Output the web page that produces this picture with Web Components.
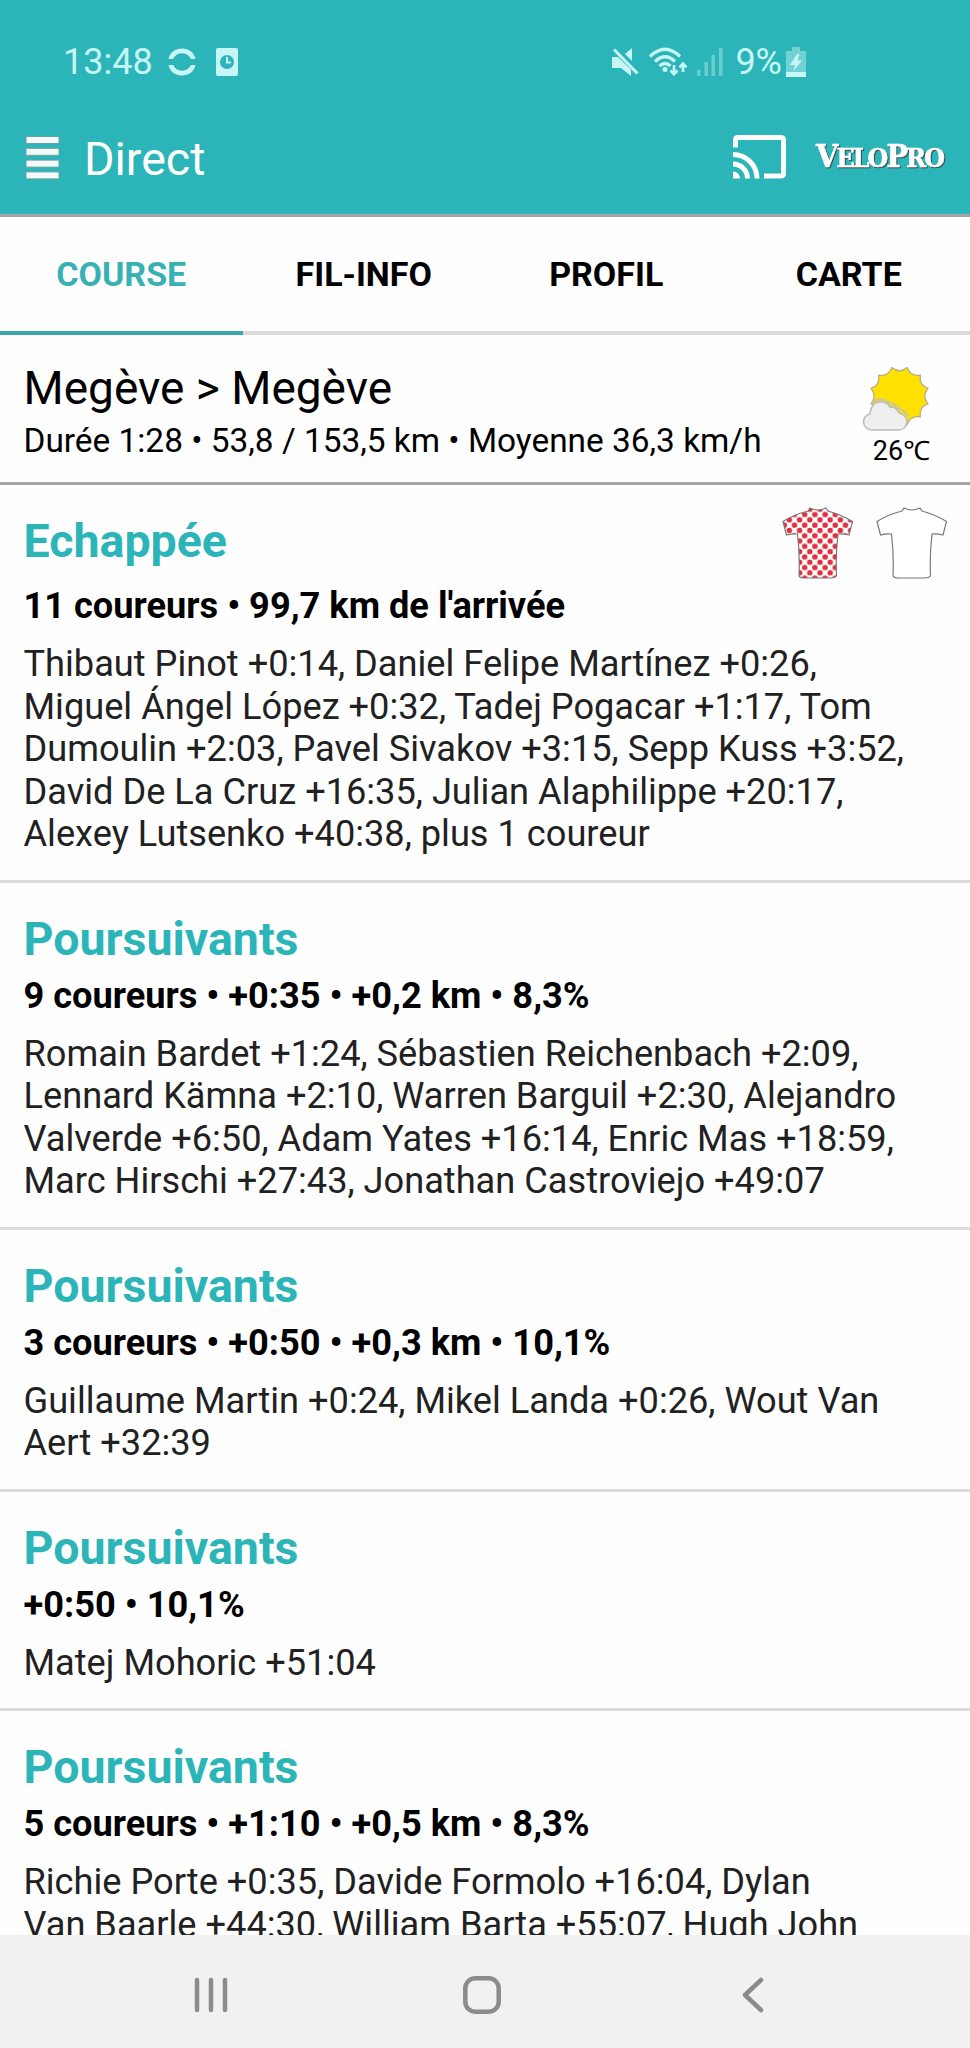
<!DOCTYPE html>
<html lang="fr">
<head>
<meta charset="utf-8">
<title>VeloPro - Direct</title>
<style>
  :root {
    --color-accent: #2cb5b8;
    --color-text: #000;
    --color-body: #212121;
    --color-divider: #dcdcdc;
    --color-border: #a3a5a5;
    --gutter: 23.5px;
  }
  body {
    margin: 0;
    height: 2048px;
    overflow: hidden;
    background: #fefefe;
    color: var(--color-text);
    font-family: Roboto, "Noto Sans", sans-serif;
  }
</style>
</head>
<body>
<velo-app>
  <status-bar slot="top" time="13:48" battery="9%"></status-bar>
  <app-header slot="top">Direct</app-header>
  <tab-bar slot="top">
    <tab-item active>COURSE</tab-item>
    <tab-item>FIL-INFO</tab-item>
    <tab-item>PROFIL</tab-item>
    <tab-item>CARTE</tab-item>
  </tab-bar>
  <stage-summary slot="top" route="Megève &gt; Megève" temperature="26℃">Durée 1:28 • 53,8 / 153,5 km • Moyenne 36,3 km/h</stage-summary>

  <rider-group heading="Echappée" info="11 coureurs • 99,7 km de l'arrivée" jerseys>
    <team-jersey slot="jerseys" dotted></team-jersey>
    <team-jersey slot="jerseys"></team-jersey>
    Thibaut Pinot +0:14, Daniel Felipe Martínez +0:26,<br>
    Miguel Ángel López +0:32, Tadej Pogacar +1:17, Tom<br>
    Dumoulin +2:03, Pavel Sivakov +3:15, Sepp Kuss +3:52,<br>
    David De La Cruz +16:35, Julian Alaphilippe +20:17,<br>
    Alexey Lutsenko +40:38, plus 1 coureur
  </rider-group>
  <rider-group heading="Poursuivants" info="9 coureurs • +0:35 • +0,2 km • 8,3%">
    Romain Bardet +1:24, Sébastien Reichenbach +2:09,<br>
    Lennard Kämna +2:10, Warren Barguil +2:30, Alejandro<br>
    Valverde +6:50, Adam Yates +16:14, Enric Mas +18:59,<br>
    Marc Hirschi +27:43, Jonathan Castroviejo +49:07
  </rider-group>
  <rider-group heading="Poursuivants" info="3 coureurs • +0:50 • +0,3 km • 10,1%">
    Guillaume Martin +0:24, Mikel Landa +0:26, Wout Van<br>
    Aert +32:39
  </rider-group>
  <rider-group heading="Poursuivants" info="+0:50 • 10,1%">
    Matej Mohoric +51:04
  </rider-group>
  <rider-group heading="Poursuivants" info="5 coureurs • +1:10 • +0,5 km • 8,3%">
    Richie Porte +0:35, Davide Formolo +16:04, Dylan<br>
    Van Baarle +44:30, William Barta +55:07, Hugh John
  </rider-group>

  <nav-buttons slot="bottom"></nav-buttons>
</velo-app>

<script>
class VeloApp extends HTMLElement {
  constructor() {
    super();
    this.attachShadow({ mode: "open" });
    this.shadowRoot.innerHTML = `
      <style>
        :host {
          display: flex;
          flex-direction: column;
          height: 100%;
        }
        main {
          flex: 1;
          min-height: 0;
          overflow: hidden;
        }
      </style>
      <slot name="top"></slot>
      <main><slot></slot></main>
      <slot name="bottom"></slot>
    `;
  }
}

class StatusBar extends HTMLElement {
  constructor() {
    super();
    this.attachShadow({ mode: "open" });
    this.shadowRoot.innerHTML = `
      <style>
        :host {
          display: flex;
          flex: none;
          justify-content: space-between;
          height: 110px;
          padding: 13px 164px 0 63px;
          box-sizing: border-box;
          background: var(--color-accent);
          color: #c8f5f5;
          font-size: 36px;
        }
        div {
          display: flex;
          align-items: center;
        }
        svg {
          display: block;
          fill: currentColor;
        }
        #sync { margin-left: 15px; }
        #clock { margin-left: 20px; }
        #wifi { margin-left: 10px; }
        #signal { margin-left: 9px; }
        #battery { margin-left: 12px; }
        #charge { margin-left: 4px; }
      </style>
      <div>
        <span id="time"></span>
        <svg id="sync" width="28" height="28" viewBox="0 0 28 28">
          <path d="M.500 11C2 4 7.500 .500 14 .500S26 4 27.500 11H23C21 7.300 18 5.300 14 5.300S7 7.300 5 11Z"/>
          <path d="M.500 17C2 24 7.500 27.500 14 27.500S26 24 27.500 17H23C21 20.700 18 22.700 14 22.700S7 20.700 5 17Z"/>
        </svg>
        <svg id="clock" width="22" height="28" viewBox="0 0 22 28">
          <path fill-rule="evenodd" d="M2 0H20Q22 0 22 2V26Q22 28 20 28H2Q0 28 0 26V2Q0 0 2 0ZM11 7A7 7 0 1 0 11 21A7 7 0 1 0 11 7Z"/>
          <path d="M11 9V14.500H15" fill="none" stroke="currentColor" stroke-width="2"/>
        </svg>
      </div>
      <div>
        <svg id="mute" width="27" height="28" viewBox="0 0 27 28">
          <path d="M0 9H6L19 21.500V28L9 20H0Z"/>
          <path d="M13 6L20 0V13Z"/>
          <path d="M2 1.500L25.500 25.500" fill="none" stroke="currentColor" stroke-width="3"/>
        </svg>
        <svg id="wifi" width="39" height="30" viewBox="0 0 39 30">
          <g fill="none" stroke="currentColor" stroke-width="3.200">
            <path d="M1 9.500Q16-5 31 9.500"/>
            <path d="M6 14.500Q16 5 26 14.500"/>
            <path d="M10.500 19Q16 14 21.500 19"/>
            <path d="M25 18V27M21.500 23.500L25 27.300L28.500 23.500M34 25V17M30.500 20.300L34 16.500L37.500 20.300" stroke-width="2.600"/>
          </g>
          <circle cx="16" cy="22.500" r="2.500"/>
        </svg>
        <svg id="signal" width="26" height="28" viewBox="0 0 26 28" opacity=".4">
          <path d="M0 22H3.500V28H0ZM7.500 14H11V28H7.500ZM14.500 7H18V28H14.500ZM22 0H25.500V28H22Z"/>
        </svg>
        <span id="battery"></span>
        <svg id="charge" width="20" height="30" viewBox="0 0 20 30">
          <path d="M6 0H14V4H20V30H0V4H6Z" opacity=".45"/>
          <path d="M0 25H20V30H0ZM11 7L4 18H9L7.500 24L16 13.500H11.500L13.500 7Z"/>
        </svg>
      </div>
    `;
  }

  connectedCallback() {
    this.shadowRoot.querySelector("#time").textContent = this.getAttribute("time");
    this.shadowRoot.querySelector("#battery").textContent = this.getAttribute("battery");
  }
}

class AppHeader extends HTMLElement {
  constructor() {
    super();
    this.attachShadow({ mode: "open" });
    this.shadowRoot.innerHTML = `
      <style>
        :host {
          display: flex;
          flex: none;
          align-items: center;
          height: 107px;
          padding: 0 24px 10px 25px;
          box-sizing: border-box;
          border-bottom: 3px solid var(--color-border);
          background: var(--color-accent);
          color: #fff;
        }
        h1 {
          flex: 1;
          margin: 4px 0 0 24px;
          font-size: 46.500px;
          font-weight: 400;
        }
        svg {
          display: block;
        }
        #brand {
          width: 130px;
          margin-left: 30px;
          font: 700 26.500px/40px "DejaVu Serif Condensed", "DejaVu Serif", serif;
          font-stretch: condensed;
          letter-spacing: -1.900px;
          white-space: nowrap;
          -webkit-text-stroke: .6px #fff;
          filter: drop-shadow(1.500px 1.500px .600px #3c4a4a);
        }
        #brand b {
          font-size: 32px;
        }
      </style>
      <svg width="35" height="45" viewBox="0 0 35 45" fill="#f4f8f8" stroke="#68a3a4" stroke-width="1">
        <rect x="1" y="1.500" width="33" height="7"/>
        <rect x="1" y="13.300" width="33" height="7"/>
        <rect x="1" y="25.100" width="33" height="7"/>
        <rect x="1" y="36.900" width="33" height="7"/>
      </svg>
      <h1><slot></slot></h1>
      <svg width="53" height="44" viewBox="0 0 53 44" fill="none" stroke="#fff" stroke-width="5">
        <path d="M2.500 12.500V5Q2.500 2.500 5 2.500H47.500Q50.500 2.500 50.500 5V38.500Q50.500 41 47.500 41H31"/>
        <path d="M0 19.500A24 24 0 0 1 24 43.500M0 29A14.500 14.500 0 0 1 14.500 43.500"/>
        <path d="M0 36.500A7 7 0 0 1 7 43.500H0Z" fill="#fff" stroke="none"/>
      </svg>
      <span id="brand"><b>V</b>ELO<b>P</b>RO</span>
    `;
  }
}

class TabBar extends HTMLElement {
  constructor() {
    super();
    this.attachShadow({ mode: "open" });
    this.shadowRoot.innerHTML = `
      <style>
        :host {
          display: grid;
          flex: none;
          grid-template-columns: repeat(4, 1fr);
          height: 118px;
        }
      </style>
      <slot></slot>
    `;
  }
}

class TabItem extends HTMLElement {
  constructor() {
    super();
    this.attachShadow({ mode: "open" });
    this.shadowRoot.innerHTML = `
      <style>
        :host {
          display: flex;
          align-items: center;
          justify-content: center;
          box-sizing: border-box;
          border-bottom: 4px solid var(--color-divider);
          font-size: 34px;
          font-weight: 700;
        }
        :host([active]) {
          color: #38b1b3;
          border-color: #3aa9ac;
        }
      </style>
      <slot></slot>
    `;
  }
}

class StageSummary extends HTMLElement {
  constructor() {
    super();
    this.attachShadow({ mode: "open" });
    this.shadowRoot.innerHTML = `
      <style>
        :host {
          display: flex;
          flex: none;
          justify-content: space-between;
          height: 150px;
          padding: 0 40px 0 var(--gutter);
          box-sizing: border-box;
          border-bottom: 3px solid var(--color-border);
        }
        h2 {
          margin: 26px 0 0;
          font-size: 46px;
          line-height: 54px;
          font-weight: 400;
        }
        p {
          margin: 4px 0 0;
          font-size: 33.400px;
          line-height: 43px;
        }
        #weather {
          display: flex;
          flex-direction: column;
          align-items: flex-end;
          padding-top: 31px;
          font-size: 27px;
          line-height: 38px;
        }
        svg {
          display: block;
          margin-right: 1px;
        }
      </style>
      <div>
        <h2></h2>
        <p><slot></slot></p>
      </div>
      <div id="weather">
        <svg width="67" height="66" viewBox="0 0 67 66" stroke-linejoin="round">
          <path id="sun" fill="#ffe100" stroke="#b9ad86" stroke-width="1.300"/>
          <path d="M10 64Q2 63 1.500 56Q2 49 8 48Q9 37 17 36Q24 35 28 41Q34 40 37 47Q45 49 45 56Q44 64 36 64Z" fill="#efefef" stroke="#bbb" stroke-width="1.500"/>
          <path d="M10 38Q13 33 17 34Q23 32 27 37Q33 37 37 43Q43 44 46 50" fill="none" stroke="#c9c4b2" stroke-width="2"/>
        </svg>
        <span id="temperature"></span>
      </div>
    `;
  }

  connectedCallback() {
    this.shadowRoot.querySelector("h2").textContent = this.getAttribute("route");
    this.shadowRoot.querySelector("#temperature").textContent = this.getAttribute("temperature");
    this.shadowRoot.querySelector("#sun").setAttribute("d", this.sunPath(37.5, 30, 29.5, 26));
  }

  // Twelve points joined by arcs that bow inwards
  sunPath(cx, cy, tip, inner) {
    const at = (deg, r) => {
      const a = deg * Math.PI / 180;
      return (cx + Math.cos(a) * r).toFixed(1) + " " + (cy + Math.sin(a) * r).toFixed(1);
    };
    let d = "M" + at(15, tip);
    for (let i = 1; i <= 12; i++) {
      d += "Q" + at(i * 30, inner - 4) + " " + at(i * 30 + 15, tip);
    }
    return d + "Z";
  }
}

class TeamJersey extends HTMLElement {
  constructor() {
    super();
    this.attachShadow({ mode: "open" });
    this.shadowRoot.innerHTML = `
      <style>
        :host {
          display: block;
        }
        svg {
          display: block;
        }
        #dots {
          display: none;
        }
        :host([dotted]) #dots {
          display: inline;
        }
      </style>
      <svg width="71" height="72" viewBox="0 0 71 72">
        <defs>
          <pattern id="polka" width="10.200" height="10.600" patternUnits="userSpaceOnUse" x="12.500" y="7.500">
            <g fill="#e02f3e">
              <circle cx="5.100" cy="5.300" r="2.750"/>
              <circle cx="0" cy="0" r="2.750"/>
              <circle cx="10.200" cy="0" r="2.750"/>
              <circle cx="0" cy="10.600" r="2.750"/>
              <circle cx="10.200" cy="10.600" r="2.750"/>
            </g>
          </pattern>
          <path id="shape" d="M28 1Q35.500 5 44 1L46 4Q60 8 70.500 14.500L67 28Q61 26.500 56 27Q53.500 48 54.500 69Q53 71 49 71H22Q18 71 17 69Q18 48 15.500 27Q10 26.500 4.500 28L1 14.500Q11 8 26 4Z"/>
        </defs>
        <use href="#shape" fill="#fff"/>
        <use id="dots" href="#shape" fill="url(#polka)"/>
        <use href="#shape" fill="none" stroke="#777" stroke-width="1.200"/>
      </svg>
    `;
  }
}

class RiderGroup extends HTMLElement {
  constructor() {
    super();
    this.attachShadow({ mode: "open" });
    this.shadowRoot.innerHTML = `
      <style>
        :host {
          display: block;
          padding: 28px var(--gutter) 24px;
          border-bottom: 3px solid var(--color-divider);
        }
        header {
          display: flex;
          justify-content: space-between;
          height: 64px;
        }
        :host([jerseys]) {
          padding-top: 22px;
        }
        :host([jerseys]) header {
          height: 78px;
        }
        h2 {
          margin: 0;
          color: var(--color-accent);
          font-size: 46.500px;
          line-height: 56px;
          font-weight: 700;
        }
        :host([jerseys]) h2 {
          padding-top: 6px;
        }
        #jerseys {
          display: flex;
          gap: 23px;
        }
        #info {
          margin: 0 0 16px;
          font-size: 36.200px;
          line-height: 42px;
          font-weight: 700;
        }
        #riders {
          margin: 0;
          color: var(--color-body);
          font-size: 36.200px;
          line-height: 42.500px;
          white-space: nowrap;
        }
      </style>
      <header>
        <h2></h2>
        <div id="jerseys"><slot name="jerseys"></slot></div>
      </header>
      <p id="info"></p>
      <p id="riders"><slot></slot></p>
    `;
  }

  connectedCallback() {
    this.shadowRoot.querySelector("h2").textContent = this.getAttribute("heading");
    this.shadowRoot.querySelector("#info").textContent = this.getAttribute("info");
  }
}

class NavButtons extends HTMLElement {
  constructor() {
    super();
    this.attachShadow({ mode: "open" });
    this.shadowRoot.innerHTML = `
      <style>
        :host {
          display: flex;
          flex: none;
          align-items: center;
          justify-content: space-between;
          height: 113px;
          padding: 6px 206px 0 193px;
          box-sizing: border-box;
          background: #f1f1f1;
        }
        svg {
          display: block;
          fill: none;
          stroke: #8b8b8b;
          stroke-width: 4.500px;
        }
        #home {
          margin-right: 7px;
        }
      </style>
      <svg width="36" height="36" viewBox="0 0 36 36" stroke-linecap="round">
        <path d="M4 3V33M18 3V33M32 3V33"/>
      </svg>
      <svg id="home" width="38" height="38" viewBox="0 0 38 38">
        <rect x="2.300" y="2.300" width="33.400" height="33.400" rx="10"/>
      </svg>
      <svg width="22" height="36" viewBox="0 0 22 36" stroke-linecap="round" stroke-linejoin="round">
        <path d="M19 3L3 18L19 33"/>
      </svg>
    `;
  }
}

customElements.define("velo-app", VeloApp);
customElements.define("status-bar", StatusBar);
customElements.define("app-header", AppHeader);
customElements.define("tab-bar", TabBar);
customElements.define("tab-item", TabItem);
customElements.define("stage-summary", StageSummary);
customElements.define("team-jersey", TeamJersey);
customElements.define("rider-group", RiderGroup);
customElements.define("nav-buttons", NavButtons);
</script>
</body>
</html>
